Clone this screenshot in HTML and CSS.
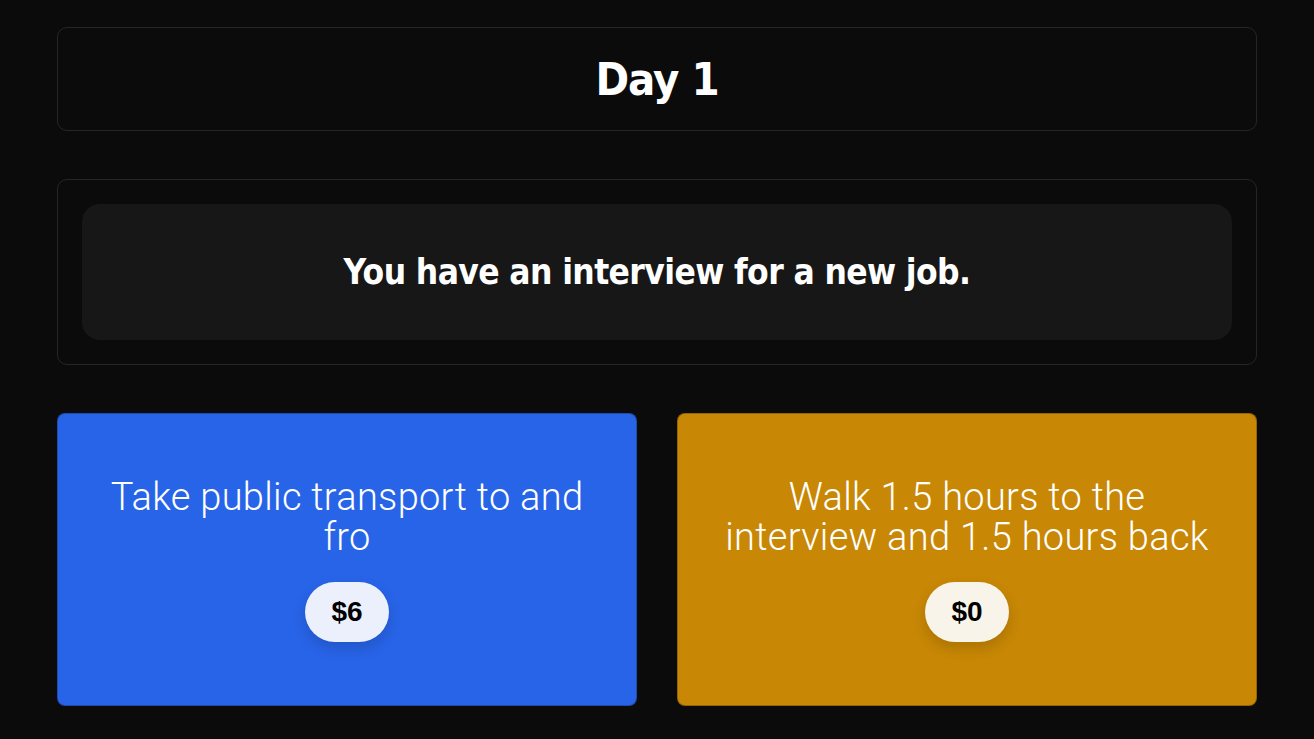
FILE: index.html
```html
<!DOCTYPE html>
<html>
<head>
<meta charset="utf-8">
<link rel="stylesheet" href="styles.css">
</head>
<body>
<main class="page">
  <header class="day-box">
    <h1 class="day-title">Day 1</h1>
  </header>
  <section class="scenario-box">
    <div class="scenario-inner">
      <p class="scenario-text">You have an interview for a new job.</p>
    </div>
  </section>
  <section class="choices">
    <div class="choice choice-blue">
      <p class="choice-text">Take public transport to and fro</p>
      <span class="price price-blue">$6</span>
    </div>
    <div class="choice choice-amber">
      <p class="choice-text">Walk 1.5 hours to the interview and 1.5 hours back</p>
      <span class="price price-amber">$0</span>
    </div>
  </section>
</main>
</body>
</html>
```
FILE: styles.css
```css
html, body {
  margin: 0;
  padding: 0;
  background: #0b0b0b;
  color: #fff;
  font-family: "DejaVu Sans Condensed", "DejaVu Sans", sans-serif;
  font-stretch: condensed;
}
.page {
  width: 1200px;
  margin: 0 auto;
  padding-top: 27px;
  display: flex;
  flex-direction: column;
  gap: 48px;
}
.day-box {
  height: 102px;
  border: 1px solid #262626;
  border-radius: 10px;
  display: flex;
  align-items: center;
  justify-content: center;
}
.day-title {
  margin: 0;
  font-size: 45px;
  font-weight: 700;
  line-height: 1;
  letter-spacing: -1px;
}
.scenario-box {
  border: 1px solid #262626;
  border-radius: 10px;
  padding: 24px;
}
.scenario-inner {
  background: #171717;
  border-radius: 18px;
  height: 136px;
  display: flex;
  align-items: center;
  justify-content: center;
}
.scenario-text {
  margin: 0;
  font-size: 35px;
  font-weight: 700;
  letter-spacing: -0.6px;
}
.choices {
  display: flex;
  gap: 40px;
}
.choice {
  flex: 1;
  height: 291px;
  border: 1px solid rgba(0,0,0,0.25);
  border-radius: 8px;
  display: flex;
  flex-direction: column;
  align-items: center;
  justify-content: center;
  gap: 25px;
  padding: 0 40px;
}
.choice-blue { background: #2864e8; }
.choice-amber { background: #c88705; }
.choice-text {
  margin: 0;
  font-family: Roboto, sans-serif;
  font-stretch: normal;
  font-weight: 300;
  font-size: 38px;
  line-height: 40px;
  letter-spacing: 0.3px;
  text-align: center;
  max-width: 500px;
}
.price {
  height: 60px;
  padding: 0 26px;
  border-radius: 30px;
  display: flex;
  align-items: center;
  font-family: "Liberation Sans", sans-serif;
  font-stretch: normal;
  font-weight: 700;
  font-size: 28px;
  color: #000;
  box-shadow: 0 6px 14px rgba(0,0,0,0.15);
}
.price-blue { background: #ebf0fc; }
.price-amber { background: #f9f4ea; }
```
